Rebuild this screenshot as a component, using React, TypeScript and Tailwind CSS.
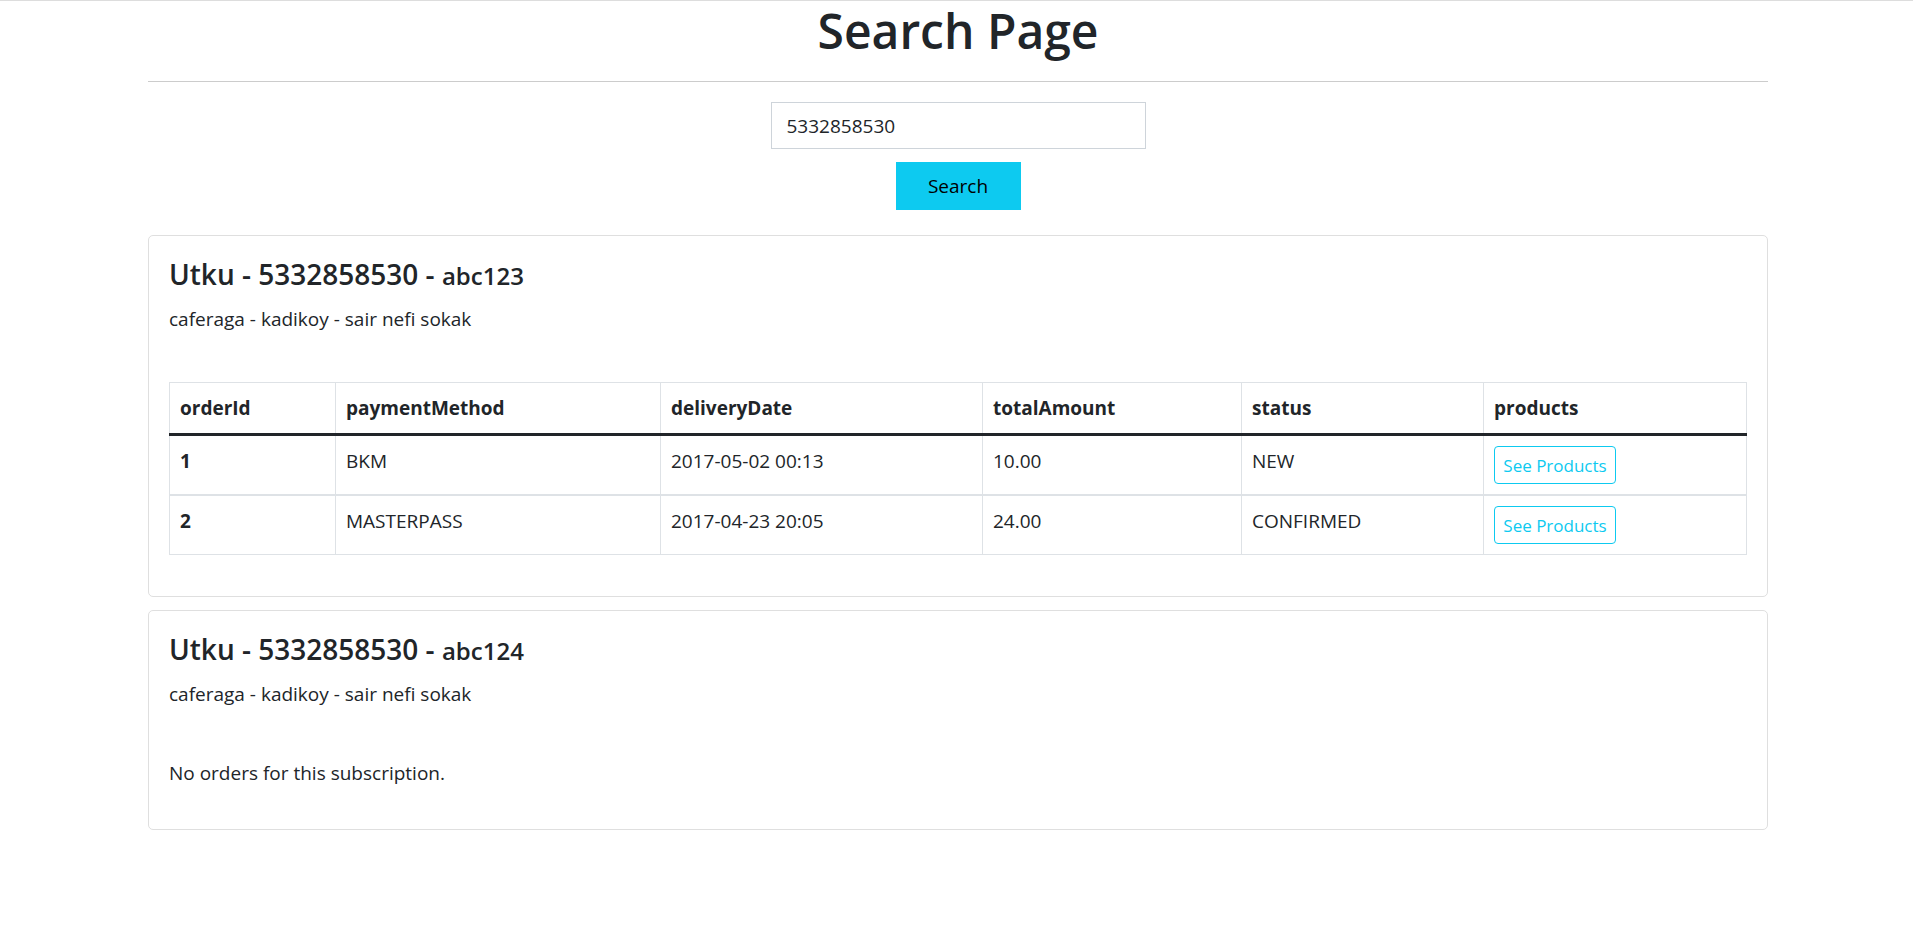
import React from "react";

type Order = {
  orderId: string;
  paymentMethod: string;
  deliveryDate: string;
  totalAmount: string;
  status: string;
};

const orders: Order[] = [
  { orderId: "1", paymentMethod: "BKM", deliveryDate: "2017-05-02 00:13", totalAmount: "10.00", status: "NEW" },
  { orderId: "2", paymentMethod: "MASTERPASS", deliveryDate: "2017-04-23 20:05", totalAmount: "24.00", status: "CONFIRMED" },
];

function CardHeader({ code, spacer }: { code: string; spacer: string }) {
  return (
    <>
      <h4 className="text-[28px] leading-[36px] font-semibold mb-[10px]">
        Utku - 5332858530 - <span className="text-[24px]">{code}</span>
      </h4>
      <p className="text-[19px] leading-[30px] mb-[20px]">caferaga - kadikoy - sair nefi sokak</p>
      <div className={spacer} />
    </>
  );
}

function OrdersTable() {
  const th = "text-left font-bold px-[10px] py-[10px] leading-[30px] border border-[#dee2e6] align-top";
  const td = "px-[10px] py-[10px] leading-[30px] border-x border-[#dee2e6] align-top";
  return (
    <table className="w-full table-fixed border-collapse mb-[21px] text-[19px]">
      <colgroup>
        <col className="w-[166px]" />
        <col className="w-[325px]" />
        <col className="w-[322px]" />
        <col className="w-[259px]" />
        <col className="w-[242px]" />
        <col className="w-[263px]" />
      </colgroup>
      <thead>
        <tr className="border-b-[3px] border-b-[#212529]">
          <th className={th}>orderId</th>
          <th className={th}>paymentMethod</th>
          <th className={th}>deliveryDate</th>
          <th className={th}>totalAmount</th>
          <th className={th}>status</th>
          <th className={th}>products</th>
        </tr>
      </thead>
      <tbody>
        {orders.map((o, i) => (
          <tr
            key={o.orderId}
            className={i === 0 ? "border-b-2 border-b-[#dee2e6]" : "border-b border-b-[#dee2e6]"}
          >
            <th className={td + " text-left font-bold"}>{o.orderId}</th>
            <td className={td}>{o.paymentMethod}</td>
            <td className={td}>{o.deliveryDate}</td>
            <td className={td}>{o.totalAmount}</td>
            <td className={td}>{o.status}</td>
            <td className={td}>
              <button className="flex items-center justify-center w-[122px] h-[38px] border border-[#0dcaf0] rounded-[4px] text-[#0dcaf0] text-[17px] leading-none bg-white">
                See Products
              </button>
            </td>
          </tr>
        ))}
      </tbody>
    </table>
  );
}

export default function App() {
  return (
    <div className="min-h-screen bg-white text-[#212529] border-t border-[#dddddd] font-['Open_Sans','Noto_Sans',sans-serif]">
      <div className="w-[1620px] ml-[148px]">
        <h1 className="text-center text-[48px] leading-[60px] font-semibold">Search Page</h1>
        <hr className="mt-[20px] border-0 border-t border-[#cccccc]" />
        <div className="flex flex-col items-center mt-[20px]">
          <input
            className="w-[375px] h-[47px] border border-[#ced4da] px-[15px] text-[19px] text-[#212529] outline-none"
            defaultValue="5332858530"
          />
          <button className="mt-[13px] w-[125px] h-[48px] bg-[#0dcaf0] text-black text-[19px]">Search</button>
        </div>

        <div className="mt-[25px] border border-[#dfdfdf] rounded-[5px] p-[20px]">
          <CardHeader code="abc123" spacer="h-[28px]" />
          <OrdersTable />
        </div>

        <div className="mt-[13px] border border-[#dfdfdf] rounded-[5px] p-[20px]">
          <CardHeader code="abc124" spacer="h-[29px]" />
          <p className="text-[19px] leading-[30px] mb-[21px]">No orders for this subscription.</p>
        </div>
      </div>
    </div>
  );
}
